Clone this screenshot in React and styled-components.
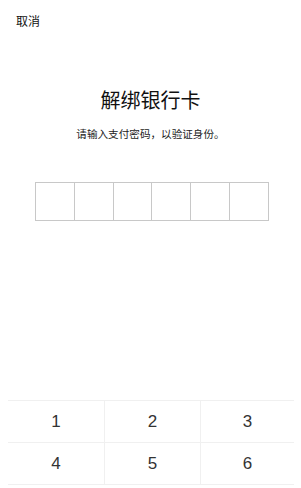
import React from "react";
import styled, { createGlobalStyle } from "styled-components";

const Global = createGlobalStyle`
  html, body { margin: 0; padding: 0; background: #fff; }
  body { font-family: "Noto Sans CJK SC", "Noto Sans", sans-serif; color: #222; }
`;

const Page = styled.div`
  display: flex;
  flex-direction: column;
  width: 301px;
`;

const Header = styled.div`
  padding: 13px 16px 0;
  font-size: 12px;
  line-height: 16px;
  color: #111;
`;

const Title = styled.h1`
  margin: 61px 0 0;
  text-align: center;
  font-size: 20px;
  line-height: 20px;
  font-weight: 400;
  color: #111;
`;

const Subtitle = styled.p`
  margin: 18px 0 0;
  text-align: center;
  font-size: 10.6px;
  line-height: 11px;
  color: #222;
`;

const Boxes = styled.div`
  margin: 43px 0 0 35px;
  display: flex;
  width: 234px;
  height: 39px;
  box-sizing: border-box;
  border: 1px solid #c8c8c8;
`;

const Box = styled.div`
  flex: 1;
  border-left: ${(p) => (p.$first ? "none" : "1px solid #c8c8c8")};
`;

const Keypad = styled.div`
  margin: 179px 0 0 8px;
  width: 286px;
  display: grid;
  grid-template-columns: 96px 96px 94px;
  border-top: 1px solid #f0f0f0;
`;

const Key = styled.div`
  height: 41px;
  display: flex;
  align-items: center;
  justify-content: center;
  font-family: "Liberation Sans", Arial, sans-serif;
  font-size: 17px;
  color: #333;
  border-bottom: 1px solid #f0f0f0;
  border-left: ${(p) => (p.$col === 0 ? "none" : "1px solid #f0f0f0")};
`;

const keys = ["1", "2", "3", "4", "5", "6"];

export default function App() {
  return (
    <Page>
      <Global />
      <Header>取消</Header>
      <Title>解绑银行卡</Title>
      <Subtitle>请输入支付密码，以验证身份。</Subtitle>
      <Boxes>
        {[0, 1, 2, 3, 4, 5].map((i) => (
          <Box key={i} $first={i === 0} />
        ))}
      </Boxes>
      <Keypad>
        {keys.map((k, i) => (
          <Key key={i} $col={i % 3}>
            {k}
          </Key>
        ))}
      </Keypad>
    </Page>
  );
}
